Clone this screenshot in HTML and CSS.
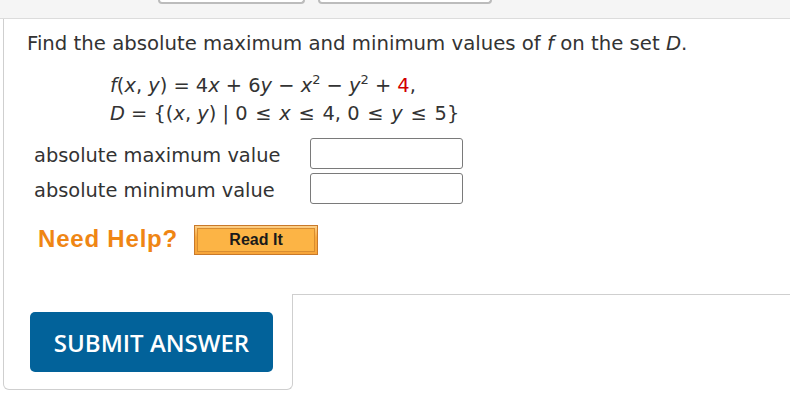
FILE: index.html
```html
<!DOCTYPE html>
<html>
<head>
<meta charset="utf-8">
<link rel="stylesheet" href="styles.css">
</head>
<body>
<div class="topbar">
  <div class="tab tab1"></div>
  <div class="tab tab2"></div>
</div>
<div class="main">
  <div class="question">
    <p class="prompt">Find the absolute maximum and minimum values of <i>f</i> on the set <i>D</i>.</p>
    <div class="formula">
      <div class="fline"><i>f</i>(<i>x</i>, <i>y</i>) = 4<i>x</i> + 6<i>y</i> − <i>x</i><sup>2</sup> − <i>y</i><sup>2</sup> + <span class="red">4</span>,</div>
      <div class="fline"><i>D</i> = {(<i>x</i>, <i>y</i>) | 0 <span class="rel">≤</span> <i>x</i> <span class="rel">≤</span> 4, 0 <span class="rel">≤</span> <i>y</i> <span class="rel">≤</span> 5}</div>
    </div>
    <div class="answers">
      <div class="arow"><span class="alabel">absolute maximum value</span><span class="abox"></span></div>
      <div class="arow"><span class="alabel">absolute minimum value</span><span class="abox"></span></div>
    </div>
    <div class="help">
      <span class="needhelp">Need Help?</span>
      <span class="readit"><span class="readit-inner">Read It</span></span>
    </div>
  </div>
  <div class="bottom">
    <div class="submitcell"><button class="submit">SUBMIT ANSWER</button></div>
    <div class="filler"></div>
  </div>
</div>
</body>
</html>
```
FILE: styles.css
```css
html, body {
  margin: 0;
  padding: 0;
  background: #fff;
}
body {
  width: 790px;
  height: 407px;
  overflow: hidden;
  font-family: "DejaVu Sans", Verdana, sans-serif;
  color: #333;
}
.topbar {
  height: 18px;
  background: #f5f5f5;
  border-bottom: 1px solid #dcdcdc;
  display: flex;
  align-items: flex-start;
  padding-left: 158px;
  gap: 13px;
}
.tab {
  height: 2px;
  border: 2px solid #bcbcbc;
  border-top: none;
  border-radius: 0 0 6px 6px;
  background: #fff;
}
.tab1 { width: 143px; }
.tab2 { width: 170px; }
.main {
  margin-left: 3px;
}
.question {
  border-left: 1px solid #cfcfcf;
  padding: 13px 0 0 23px;
  height: 275px;
  box-sizing: border-box;
}
.prompt {
  margin: 0;
  font-size: 19.7px;
  line-height: 24px;
  white-space: nowrap;
}
.formula {
  margin: 16px 0 0 83px;
  font-size: 19.4px;
}
.fline {
  line-height: 28px;
  height: 28px;
  white-space: nowrap;
}
.rel {
  padding: 0 1.6px;
}
sup {
  font-size: 13px;
  line-height: 0;
  vertical-align: 8px;
}
.red { color: #d10000; }
.answers {
  margin: 10px 0 0 7px;
}
.arow {
  display: flex;
  align-items: flex-start;
  height: 35px;
}
.alabel {
  font-size: 19.4px;
  line-height: 31px;
  padding-top: 2px;
  width: 276px;
}
.abox {
  width: 153px;
  height: 31px;
  border: 1px solid #7a7a7a;
  border-radius: 3px;
  box-sizing: border-box;
  display: block;
}
.help {
  display: flex;
  align-items: flex-start;
  margin: 17px 0 0 11px;
  gap: 16px;
}
.needhelp {
  font-family: "Liberation Sans", Arial, sans-serif;
  font-weight: bold;
  font-size: 24px;
  letter-spacing: 0.8px;
  line-height: 30px;
  margin-top: -1px;
  color: #ef8614;
}
.readit {
  display: block;
  width: 124px;
  height: 30px;
  box-sizing: border-box;
  border: 1px solid #c9792a;
  background: linear-gradient(#fcd08a, #f8a93c 40%, #f7a53a);
  padding: 2px;
}
.readit-inner {
  display: flex;
  align-items: center;
  justify-content: center;
  height: 100%;
  box-sizing: border-box;
  border: 1px solid #d98d30;
  background: #fcb445;
  font-family: "Liberation Sans", Arial, sans-serif;
  font-weight: bold;
  font-size: 16px;
  color: #1a1a1a;
}
.bottom {
  display: flex;
}
.submitcell {
  width: 290px;
  height: 96px;
  box-sizing: border-box;
  border: 1px solid #cfcfcf;
  border-top: none;
  border-radius: 0 0 6px 6px;
  padding: 18px 0 0 26px;
}
.filler {
  flex: 1;
  border-top: 1px solid #cfcfcf;
}
.submit {
  width: 243px;
  height: 60px;
  border: none;
  border-radius: 5px;
  background: #02629a;
  color: #fff;
  font-family: "Open Sans", sans-serif;
  font-weight: 600;
  font-size: 24px;
  padding: 0;
}
```
